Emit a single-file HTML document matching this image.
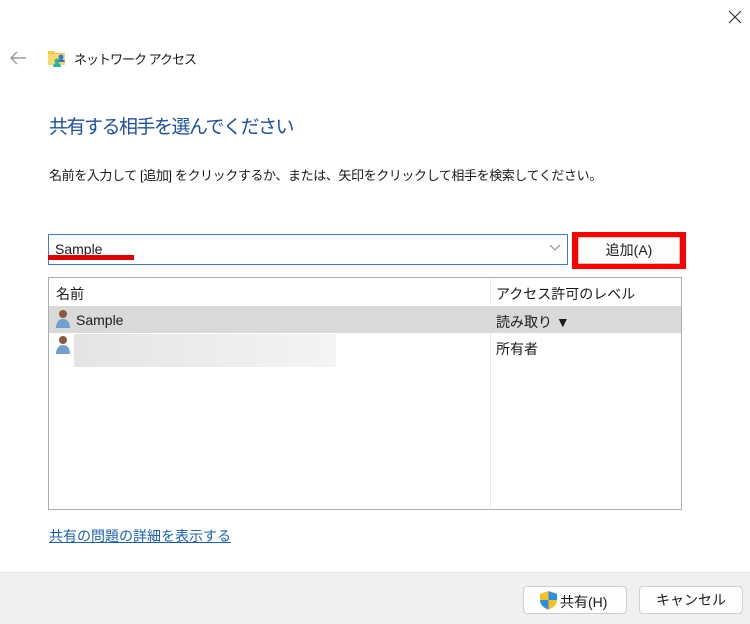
<!DOCTYPE html>
<html><head><meta charset="utf-8"><style>
*{margin:0;padding:0;box-sizing:border-box}
body{width:750px;height:624px;background:#fff;position:relative;overflow:hidden;font-family:"Liberation Sans","Noto Sans CJK JP",sans-serif;color:#1a1a1a;font-size:14px}
.a{position:absolute;white-space:nowrap}
</style></head><body>
<svg class="a" style="left:727px;top:9px" width="16" height="16"><path d="M2 2L14 14M14 2L2 14" stroke="#333" stroke-width="1.2"/></svg>
<svg class="a" style="left:9px;top:50px" width="18" height="16"><path d="M17 8H2M8 2L2 8L8 14" stroke="#999" stroke-width="1.4" fill="none"/></svg>
<svg class="a" style="left:47px;top:48px" width="20" height="20"><path d="M1 3h6l2 2h9v12H1z" fill="#f5c842"/><path d="M1 6h17v11H1z" fill="#fbd96a"/><circle cx="14" cy="9" r="2.5" fill="#2b7bd6"/><circle cx="10" cy="13" r="2.5" fill="#27b3a0"/><path d="M6 19c0-3 2-4 4-4s4 1 4 4z" fill="#27b3a0"/><path d="M11 14c0-2 2-3 3-3s4 1 4 3z" fill="#2b7bd6"/></svg>
<div class="a" style="left:74px;top:49px;font-size:13px;letter-spacing:-1px">ネットワーク アクセス</div>
<div class="a" style="left:49px;top:112px;font-size:19px;letter-spacing:-1.5px;color:#1e4fa3">共有する相手を選んでください</div>
<div class="a" style="left:49px;top:165px;font-size:13px;letter-spacing:-0.4px">名前を入力して [追加] をクリックするか、または、矢印をクリックして相手を検索してください。</div>
<div class="a" style="left:48px;top:234px;width:520px;height:31px;border:1px solid #3a7bd5;background:#fff"></div>
<div class="a" style="left:55px;top:241px">Sample</div>
<div class="a" style="left:48px;top:255px;width:86px;height:5px;background:#e00000"></div>
<svg class="a" style="left:549px;top:244px" width="12" height="8"><path d="M1 1l5 5 5-5" stroke="#888" fill="none"/></svg>
<div class="a" style="left:572px;top:232px;width:114px;height:37px;background:#f00"></div>
<div class="a" style="left:578px;top:237px;width:102px;height:27px;background:#fdfdfd;border:1px solid #ccc;text-align:center;line-height:25px">追加(A)</div>
<div class="a" style="left:48px;top:277px;width:634px;height:233px;border:1px solid #adadad"></div>
<div class="a" style="left:490px;top:278px;width:1px;height:231px;background:#eaeaea"></div>
<div class="a" style="left:56px;top:284px">名前</div>
<div class="a" style="left:496px;top:284px">アクセス許可のレベル</div>
<div class="a" style="left:49px;top:306px;width:632px;height:27px;background:#d9d9d9"></div>
<svg class="a" style="left:55px;top:309px" width="18" height="20"><circle cx="8" cy="5" r="4" fill="#8a5a3a"/><path d="M1 19c0-6 3-9 7-9s7 3 7 9z" fill="#6fa0cf"/></svg>
<div class="a" style="left:76px;top:312px">Sample</div>
<div class="a" style="left:496px;top:312px">読み取り ▼</div>
<svg class="a" style="left:55px;top:335px" width="18" height="20"><circle cx="8" cy="5" r="4" fill="#8a5a3a"/><path d="M1 19c0-6 3-9 7-9s7 3 7 9z" fill="#6fa0cf"/></svg>
<div class="a" style="left:74px;top:334px;width:262px;height:33px;background:linear-gradient(90deg,#e4e4e4,#f4f4f4)"></div>
<div class="a" style="left:496px;top:339px">所有者</div>
<div class="a" style="left:49px;top:526px;color:#1a5fb4;text-decoration:underline">共有の問題の詳細を表示する</div>
<div class="a" style="left:0;top:572px;width:750px;height:52px;background:#f0f0f0;border-top:1px solid #e3e3e3"></div>
<div class="a" style="left:523px;top:586px;width:104px;height:28px;background:#fdfdfd;border:1px solid #d0d0d0;border-radius:4px"></div>
<svg class="a" style="left:539px;top:590px" width="19" height="20"><path d="M9.5 1L18 4v6c0 5-4 8-8.5 9.5C5 18 1 15 1 10V4z" fill="#f7c21b"/><path d="M9.5 1L18 4v6H9.5zM9.5 10H1c0 5 4 8 8.5 9.5z" fill="#2a8ee6"/></svg>
<div class="a" style="left:560px;top:592px">共有(H)</div>
<div class="a" style="left:639px;top:586px;width:104px;height:28px;background:#fdfdfd;border:1px solid #d0d0d0;border-radius:4px;text-align:center;line-height:26px">キャンセル</div>
</body></html>
